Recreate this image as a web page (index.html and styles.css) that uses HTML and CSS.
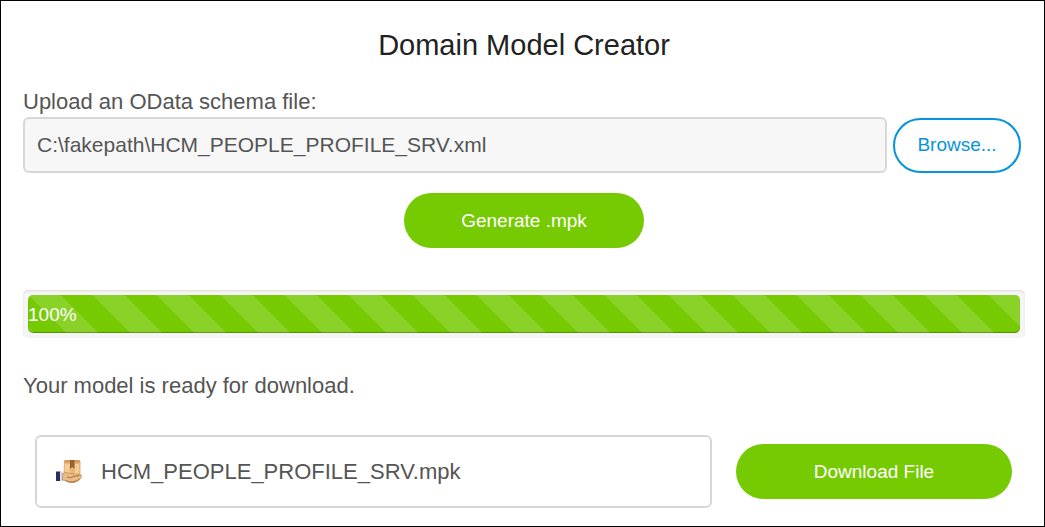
FILE: index.html
```html
<!DOCTYPE html>
<html lang="en">
<head>
<meta charset="utf-8">
<meta name="viewport" content="width=device-width, initial-scale=1">
<title>Domain Model Creator</title>
<link rel="stylesheet" href="styles.css">
</head>
<body>
<main class="creator">
  <h1 class="title">Domain Model Creator</h1>
  <form class="upload">
    <label class="upload-label" for="schema">Upload an OData schema file:</label>
    <div class="upload-row">
      <input class="path" id="schema" type="text" value="C:\fakepath\HCM_PEOPLE_PROFILE_SRV.xml" readonly>
      <button class="button button-outline" type="button">Browse...</button>
    </div>
    <button class="button button-generate" type="button">Generate .mpk</button>
  </form>
  <div class="progress" role="progressbar" aria-label="Generation progress" aria-valuemin="0" aria-valuemax="100" aria-valuenow="100">
    <div class="progress-bar" style="width: 100%">100%</div>
  </div>
  <p class="status">Your model is ready for download.</p>
  <section class="download">
    <div class="file">
      <svg class="file-icon" viewBox="0 0 26 26" aria-hidden="true">
        <path fill="#e8b878" d="M8 2.500Q8 1 10 1H22.500Q24.500 1 24.500 3V14Q24.500 16 22.500 16H9.500Q7.500 16 7.500 14Z"/>
        <path fill="#d39a58" d="M9 1H23.500L24.500 3.500H7.500Z"/>
        <path fill="#f3cd98" d="M9 5H13.500V14H9ZM19 5H23V14H19Z"/>
        <path fill="#976133" d="M14 1H18.500V10L16.200 8L14 10Z"/>
        <path fill="#292e65" d="M0 12.500H4.500V22H0Z"/>
        <path fill="#d5dbe5" d="M4 13H7V22H4Z"/>
        <path fill="#eabb85" stroke="#b88450" stroke-width=".7" d="M6.500 15Q9 12.500 12.500 14L17 15Q19.500 16 17.500 17.500L22.500 15.500Q26 15 25.500 17.500Q24 22 18 23.500Q13 24.500 9 21.500L6.500 21Z"/>
        <path fill="none" stroke="#aa7544" stroke-width="1" d="M11 18Q15 19.500 18 17.500L23.500 16.500M10 21.500Q17 25 23.500 20"/>
      </svg>
      <span>HCM_PEOPLE_PROFILE_SRV.mpk</span>
    </div>
    <button class="button button-download" type="button">Download File</button>
  </section>
</main>
</body>
</html>
```
FILE: styles.css
```css
* {
  box-sizing: border-box;
}

body {
  margin: 0;
  background: #fff;
  color: #555;
  font: 22px/26px "Liberation Sans", Arial, sans-serif;
}

.creator {
  min-height: 100vh;
  padding: 28px 19px 18px 22px;
  border: 1px solid #000;
}

.title {
  margin: 0 0 28px;
  color: #222;
  font-size: 29px;
  font-weight: 400;
  line-height: 32px;
  text-align: center;
}

.upload {
  display: flex;
  flex-direction: column;
}

.upload-label {
  padding-bottom: 2px;
}

.upload-row {
  display: flex;
  align-items: center;
  gap: 6px;
  padding-right: 4px;
}

.path {
  flex: 1;
  min-width: 0;
  height: 56px;
  padding: 0 12px;
  border: 2px solid #d7d7d7;
  border-radius: 6px;
  background: #f7f7f7;
  color: #555;
  font: 21px "Liberation Sans", Arial, sans-serif;
}

.button {
  height: 55px;
  padding: 0 22px;
  border: 0;
  border-radius: 28px;
  background: #76ca02;
  color: #fff;
  font: 19px "Liberation Sans", Arial, sans-serif;
  cursor: pointer;
}

.button-outline {
  width: 128px;
  border: 2px solid #0595db;
  background: #fff;
  color: #0595db;
}

.button-generate {
  align-self: center;
  width: 240px;
  margin-top: 20px;
}

.progress {
  margin-top: 42px;
  padding: 5px;
  border-radius: 5px;
  background: #f5f5f5;
  box-shadow: inset 0 1px 2px rgba(0, 0, 0, 0.1);
}

.progress-bar {
  height: 38px;
  border-radius: 5px;
  background-color: #76ca02;
  background-image: linear-gradient(45deg, rgba(255, 255, 255, 0.15) 25%, transparent 25%, transparent 50%, rgba(255, 255, 255, 0.15) 50%, rgba(255, 255, 255, 0.15) 75%, transparent 75%, transparent);
  background-size: 64px 64px;
  box-shadow: inset 0 -1px 1px rgba(0, 0, 0, 0.3);
  color: #fff;
  font-size: 19px;
  line-height: 40px;
}

.status {
  margin: 35px 0 36px;
}

.download {
  display: flex;
  align-items: center;
  gap: 24px;
  padding: 0 13px 0 12px;
}

.file {
  display: flex;
  flex: 1;
  align-items: center;
  gap: 19px;
  height: 73px;
  padding: 0 19px;
  border: 2px solid #d7d7d7;
  border-radius: 6px;
}

.file-icon {
  width: 26px;
  height: 26px;
}

.button-download {
  width: 276px;
}
```
